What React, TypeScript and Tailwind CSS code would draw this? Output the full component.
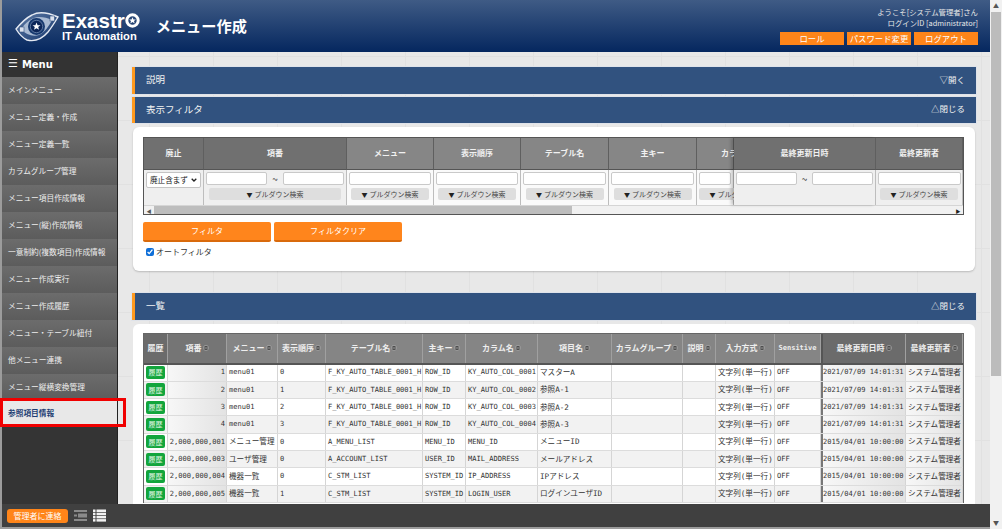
import React from 'react';

const jp = '[font-family:"Noto_Sans_CJK_JP","Liberation_Sans",sans-serif]';

const menuItems = [
    'メインメニュー',
    'メニュー定義・作成',
    'メニュー定義一覧',
    'カラムグループ管理',
    'メニュー項目作成情報',
    'メニュー(縦)作成情報',
    '一意制約(複数項目)作成情報',
    'メニュー作成実行',
    'メニュー作成履歴',
    'メニュー・テーブル紐付',
    '他メニュー連携',
    'メニュー縦横変換管理',
];

const filterCols = [
    { label: '廃止', w: 61, kind: 'select', dark: true },
    { label: '項番', w: 143, kind: 'range', dark: true },
    { label: 'メニュー', w: 87, kind: 'text' },
    { label: '表示順序', w: 87, kind: 'text' },
    { label: 'テーブル名', w: 88, kind: 'text' },
    { label: '主キー', w: 88, kind: 'text' },
    { label: 'カラム名', w: 37, kind: 'text', clip: true },
    { label: '最終更新日時', w: 142, kind: 'date', dark: true },
    { label: '最終更新者', w: 88, kind: 'text', dark: true },
];

const listCols = [
    { label: '履歴', w: 24, tone: 'bg-[#6b6b6b]', sort: false },
    { label: '項番', w: 59, tone: 'bg-[#757575]', sort: true },
    { label: 'メニュー', w: 51, tone: 'bg-[#858585]', sort: true },
    { label: '表示順序', w: 48, tone: 'bg-[#858585]', sort: true },
    { label: 'テーブル名', w: 97, tone: 'bg-[#858585]', sort: true },
    { label: '主キー', w: 43, tone: 'bg-[#858585]', sort: true },
    { label: 'カラム名', w: 72, tone: 'bg-[#858585]', sort: true },
    { label: '項目名', w: 74, tone: 'bg-[#858585]', sort: true },
    { label: 'カラムグループ', w: 71, tone: 'bg-[#858585]', sort: true },
    { label: '説明', w: 33, tone: 'bg-[#858585]', sort: true },
    { label: '入力方式', w: 59, tone: 'bg-[#858585]', sort: true },
    { label: 'Sensitive', w: 46, tone: 'bg-[#858585]', sort: false },
    { label: '最終更新日時', w: 85, tone: 'bg-[#6b6b6b]', sort: true },
    { label: '最終更新者', w: 57, tone: 'bg-[#6b6b6b]', sort: true },
];

const rows = [
    ['1', 'menu01', '0', 'F_KY_AUTO_TABLE_0001_H', 'ROW_ID', 'KY_AUTO_COL_0001', 'マスターA', '2021/07/09 14:01:31'],
    ['2', 'menu01', '1', 'F_KY_AUTO_TABLE_0001_H', 'ROW_ID', 'KY_AUTO_COL_0002', '参照A-1', '2021/07/09 14:01:31'],
    ['3', 'menu01', '2', 'F_KY_AUTO_TABLE_0001_H', 'ROW_ID', 'KY_AUTO_COL_0003', '参照A-2', '2021/07/09 14:01:31'],
    ['4', 'menu01', '3', 'F_KY_AUTO_TABLE_0001_H', 'ROW_ID', 'KY_AUTO_COL_0004', '参照A-3', '2021/07/09 14:01:31'],
    ['2,000,000,001', 'メニュー管理', '0', 'A_MENU_LIST', 'MENU_ID', 'MENU_ID', 'メニューID', '2015/04/01 10:00:00'],
    ['2,000,000,003', 'ユーザ管理', '0', 'A_ACCOUNT_LIST', 'USER_ID', 'MAIL_ADDRESS', 'メールアドレス', '2015/04/01 10:00:00'],
    ['2,000,000,004', '機器一覧', '0', 'C_STM_LIST', 'SYSTEM_ID', 'IP_ADDRESS', 'IPアドレス', '2015/04/01 10:00:00'],
    ['2,000,000,005', '機器一覧', '1', 'C_STM_LIST', 'SYSTEM_ID', 'LOGIN_USER', 'ログインユーザID', '2015/04/01 10:00:00'],
];

const ExastroLogo = () => (
    <svg width="44" height="31" viewBox="0 0 44 31">
        <defs>
            <linearGradient id="eyeFill" x1="0" y1="0" x2="1" y2="1">
                <stop offset="0" stopColor="#5f7ba6" />
                <stop offset="1" stopColor="#16376d" />
            </linearGradient>
        </defs>
        <path
            d="M1 18 C6 12 11 7 17 4 C24 0 32 1 43 6 C40 11 37 16 33 21 C27 28 20 31 12 29 C8 27 4 23 1 18 Z"
            fill="url(#eyeFill)"
            stroke="#e4e9f2"
            strokeWidth="1.4"
        />
        <path d="M6 18 C11 11 17 6 24 6 C29 6 33 7 37 9 C34 15 30 21 24 24 C18 26 11 24 6 18 Z" fill="#a9bad3" />
        <circle cx="21.5" cy="15.5" r="8.5" fill="#17396f" />
        <circle cx="21.5" cy="15.5" r="6.2" fill="#0b2558" stroke="#6d86ad" strokeWidth="0.8" />
        <path d="M21.5 11.5l1.1 2.7h2.9l-2.3 1.8.8 2.8-2.5-1.6-2.5 1.6.8-2.8-2.3-1.8h2.9z" fill="#fff" />
        <rect x="4.5" y="16" width="4.5" height="5" fill="#dbe2ee" stroke="#33527f" strokeWidth="0.6" />
        <rect x="35" y="5" width="4.5" height="5" fill="#dbe2ee" stroke="#33527f" strokeWidth="0.6" />
    </svg>
);

const SortMark = () => (
    <svg width="6" height="6" viewBox="0 0 6 6" className="ml-px shrink-0">
        <circle cx="3" cy="3" r="2.6" fill="#4a4a4a" stroke="#cfcfcf" strokeWidth="0.5" />
        <path d="M1 3h4" stroke="#cfcfcf" strokeWidth="0.6" />
    </svg>
);

const TextBox = ({ w }: { w: number }) => (
    <div className="h-[13px] shrink-0 rounded-[2px] border border-[#c9c9c9] bg-white" style={{ width: w }} />
);

const PulldownButton = ({ w }: { w: number }) => (
    <div
        className="mx-auto flex h-[12px] items-center justify-center gap-[2px] overflow-hidden whitespace-nowrap rounded-[2px] bg-[#dedede] text-[7px] text-[#444]"
        style={{ width: w }}
    >
        <span className="text-[6px] text-[#222]">▼</span>
        <span>プルダウン検索</span>
    </div>
);

const SectionBar = ({ title, action }: { title: string; action: string }) => (
    <div className="flex h-[26.5px] items-center justify-between border-l-[3px] border-l-[#ff9a1f] bg-[#31527f] pb-[2px] pl-[11px] pr-[11px] text-[9.5px] text-[#f2f2f2] shadow-[0_0_0_1px_#dfe3ea]">
        <span>{title}</span>
        <span className="text-[8.5px]">{action}</span>
    </div>
);

const FilterTable = () => (
    <div className="w-[821px] border border-[#555] bg-[#f3f3f3]">
        <div className="flex">
            {filterCols.map((col, i) => (
                <div
                    key={col.label}
                    className={`shrink-0 overflow-hidden ${col.kind === 'date' ? 'shadow-[-3px_0_3px_rgba(0,0,0,0.2)]' : ''}`}
                    style={{ width: i === 0 ? col.w - 1 : i === filterCols.length - 1 ? col.w - 1 : col.w }}
                >
                    <div
                        className={`flex h-[32px] items-center whitespace-nowrap border-b border-r border-b-[#555] border-r-[#5f5f5f] pb-[2px] text-[8px] font-bold text-[#f1f1f1] ${
                            col.clip ? 'justify-start pl-[24px]' : 'justify-center'
                        } ${col.dark ? 'bg-[#707070]' : 'bg-[#868686]'}`}
                    >
                        {col.label}
                    </div>
                    <div
                        className={`h-[35px] border-r border-[#bdbdbd] p-[2px] ${
                            col.dark ? 'bg-[#efefef]' : 'bg-[#fafafa]'
                        }`}
                    >
                        {col.kind === 'select' && (
                            <div className="flex h-[16px] items-center justify-between rounded-[2px] border border-[#c4c4c4] bg-white px-[3px] text-[7.6px] text-[#222]">
                                <span className="whitespace-nowrap">廃止含まず</span>
                                <svg width="6" height="4" viewBox="0 0 6 4">
                                    <path d="M.7.7 3 3l2.3-2.3" fill="none" stroke="#222" strokeWidth="1.3" />
                                </svg>
                            </div>
                        )}
                        {(col.kind === 'range' || col.kind === 'date') && (
                            <div className="flex items-center justify-between">
                                <TextBox w={61} />
                                <span className="text-[10px] leading-[13px] text-[#444]">~</span>
                                <TextBox w={61} />
                            </div>
                        )}
                        {col.kind === 'range' && (
                            <div className="mt-[3px]">
                                <PulldownButton w={132} />
                            </div>
                        )}
                        {col.kind === 'text' && (
                            <div className="flex flex-col gap-[3px]">
                                <TextBox w={col.w - 5} />
                                <PulldownButton w={78} />
                            </div>
                        )}
                    </div>
                </div>
            ))}
        </div>
        <div className="flex h-[9px] items-center border-t border-[#d5d5d5] bg-[#f1f1f1]">
            <span className="w-[10px] text-center text-[5px] leading-none text-[#555]">◀</span>
            <div className="h-[8px] w-[418px] bg-[#bdbdbd]" />
            <div className="flex-1" />
            <span className="w-[10px] text-center text-[5px] leading-none text-[#222]">▶</span>
        </div>
    </div>
);

const ListCell = ({ text, right, tight }: { text: string; right?: boolean; tight?: boolean }) => {
    const wide = /[^\x00-\x7f]/.test(text);
    return (
        <span
            className={`block w-full overflow-hidden whitespace-nowrap ${right ? 'pr-[1px] text-right' : tight ? 'pl-0' : 'pl-[2px]'} ${
                wide ? 'text-[7.6px]' : 'text-[7.05px]'
            }`}
        >
            {text}
        </span>
    );
};

const ListTable = () => (
    <div className="w-[821px] border border-b-0 border-[#666] bg-white [font-family:'DejaVu_Sans_Mono','Noto_Sans_CJK_JP',monospace]">
        <div className="flex h-[31px] border-b-2 border-[#555]">
            {listCols.map(col => (
                <div
                    key={col.label}
                    className={`flex shrink-0 items-center justify-center whitespace-nowrap border-r border-[#a0a0a0] text-[#eee] ${col.tone} ${
                        col.label === 'Sensitive' ? 'text-[7px] font-bold' : 'text-[8px] font-bold ' + jp
                    } ${col.label === '最終更新日時' ? 'border-l-2 border-l-[#555]' : ''}`}
                    style={{ width: col.w }}
                >
                    {col.label}
                    {col.sort && <SortMark />}
                </div>
            ))}
        </div>
        {rows.map((r, i) => {
            const cells = [r[0], r[1], r[2], r[3], r[4], r[5], r[6], '', '', '文字列(単一行)', 'OFF', r[7], 'システム管理者'];
            return (
                <div key={r[0]} className={`flex h-[17.33px] items-center border-b border-[#dcdcdc] text-[#333] ${i % 2 ? 'bg-[#f2f2f2]' : 'bg-white'}`}>
                    <div className="flex h-full w-[24px] shrink-0 items-center justify-center border-r border-[#d5d5d5]">
                        <span className={`flex h-[13px] w-[19px] items-center justify-center rounded-[2px] bg-[#12a53c] text-[7px] text-[#e4f8e9] ${jp}`}>
                            履歴
                        </span>
                    </div>
                    {cells.map((c, j) => (
                        <div
                            key={j}
                            className={`flex h-full shrink-0 items-center border-r border-[#d5d5d5] ${
                                j === 0 || j === 11 || j === 12 ? 'bg-[linear-gradient(90deg,#f7f7f7,#e3e3e3)]' : ''
                            } ${j === 11 ? 'border-l-2 border-l-[#777]' : ''}`}
                            style={{ width: listCols[j + 1].w }}
                        >
                            <ListCell text={c} right={j === 0} tight={j === 11} />
                        </div>
                    ))}
                </div>
            );
        })}
    </div>
);

export default function App() {
    return (
        <div className={`relative flex h-[529px] w-[1002px] overflow-hidden bg-[#9c9c9c] pl-[2px] ${jp}`}>
            <div className="flex h-full w-[988px] flex-col pb-[2px]">
                <header className="flex h-[52px] shrink-0 items-center justify-between bg-[linear-gradient(180deg,#3f5b85,#05275f)] pr-[12px]">
                    <div className="flex items-center">
                        <div className="ml-[13px]">
                            <ExastroLogo />
                        </div>
                        <div className="ml-[3px] flex flex-col text-white">
                            <div className="flex items-center text-[20.5px] font-bold leading-[19px] [font-family:'Liberation_Sans',sans-serif]">
                                Exastr
                                <svg width="15" height="15" viewBox="0 0 15 15">
                                    <circle cx="7.5" cy="7.5" r="5.7" fill="none" stroke="#fff" strokeWidth="3" />
                                    <path d="M7.5 4.2l1 2.3h2.4l-1.9 1.5.7 2.4-2.2-1.4-2.2 1.4.7-2.4-1.9-1.5h2.4z" fill="#fff" />
                                </svg>
                            </div>
                            <div className="text-[11.2px] font-bold leading-[12px] [font-family:'Liberation_Sans',sans-serif]">IT Automation</div>
                        </div>
                        <h1 className="ml-[16px] pb-[2px] text-[15.2px] font-bold text-white">メニュー作成</h1>
                    </div>
                    <div className="flex flex-col items-end text-[7.4px] leading-[10.5px] text-[#e8e8e8]">
                        <div>ようこそ[システム管理者]さん</div>
                        <div>ログインID [administrator]</div>
                        <div className="mt-[4px] flex gap-[3px]">
                            {['ロール', 'パスワード変更', 'ログアウト'].map(label => (
                                <div key={label} className="flex h-[13px] w-[64px] items-center justify-center bg-[#ff8519] text-[8.4px] text-white">
                                    {label}
                                </div>
                            ))}
                        </div>
                    </div>
                </header>

                <div className="flex min-h-0 flex-1">
                    <aside className="flex w-[116px] shrink-0 flex-col border-r border-[#222] bg-[#343434]">
                        <div className="flex h-[25px] items-center gap-[4px] bg-[#333] pl-[6px] text-[10px] font-bold text-white [font-family:'DejaVu_Sans',sans-serif]">
                            <span className="text-[11px] font-normal">☰</span>
                            Menu
                        </div>
                        {menuItems.map(item => (
                            <div
                                key={item}
                                className="flex h-[27px] shrink-0 items-center whitespace-nowrap bg-[linear-gradient(180deg,#6c6c6c,#5c5c5c)] pb-[2px] pl-[6px] text-[7.7px] text-[#eee]"
                            >
                                {item}
                            </div>
                        ))}
                        <div className="flex h-[26px] shrink-0 items-center bg-[#e8e8e8] pb-[2px] pl-[6px] text-[7.7px] font-bold text-[#1d3d73]">
                            参照項目情報
                        </div>
                    </aside>

                    <main className="min-w-0 flex-1 overflow-hidden bg-[#e8e8e8] bg-[linear-gradient(#e1e1e1_1px,transparent_1px),linear-gradient(90deg,#e1e1e1_1px,transparent_1px)] bg-[size:64px_64px] bg-[position:31px_4px] pl-[14px] pr-[14px] pt-[15px]">
                        <SectionBar title="説明" action="▽開く" />
                        <div className="mt-[3px]">
                            <SectionBar title="表示フィルタ" action="△閉じる" />
                        </div>
                        <section className="mx-[1px] mt-[4px] h-[144px] rounded-[6px] bg-white pl-[10px] pt-[10px] shadow-[0_1px_2px_rgba(0,0,0,0.2)]">
                            <FilterTable />
                            <div className="mt-[7px] flex gap-[3px]">
                                {['フィルタ', 'フィルタクリア'].map(label => (
                                    <div
                                        key={label}
                                        className="flex h-[20px] w-[128px] items-center justify-center rounded-[2px] border-b-2 border-[#d96a0c] bg-[#ff851c] pb-[1px] text-[8px] text-white"
                                    >
                                        {label}
                                    </div>
                                ))}
                            </div>
                            <label className="ml-[3px] mt-[4px] flex items-center gap-[2px] text-[8px] text-[#333]">
                                <input type="checkbox" defaultChecked className="m-0 h-[8px] w-[8px] accent-[#0f6fd8]" />
                                オートフィルタ
                            </label>
                        </section>
                        <div className="mt-[22px]">
                            <SectionBar title="一覧" action="△閉じる" />
                        </div>
                        <section className="mx-[1px] mt-[4px] h-[200px] rounded-t-[6px] bg-white pl-[10px] pt-[9px]">
                            <ListTable />
                        </section>
                    </main>
                </div>

                <footer className="flex h-[23px] shrink-0 items-center gap-[6px] bg-[#404040] pl-[5px]">
                    <div className="flex h-[14px] w-[61px] items-center justify-center rounded-[3px] bg-[#ff8519] text-[8px] text-white">
                        管理者に連絡
                    </div>
                    <svg width="13" height="13" viewBox="0 0 13 13" fill="#8a8a8a">
                        <rect x="0" y="1" width="13" height="2" />
                        <rect x="4" y="4.5" width="9" height="4" />
                        <rect x="0" y="5.5" width="3" height="2" />
                        <rect x="0" y="10" width="13" height="2" />
                    </svg>
                    <svg width="13" height="13" viewBox="0 0 13 13" fill="#f2f2f2">
                        <rect x="0" y="0.5" width="2.5" height="2.5" />
                        <rect x="3.5" y="0.5" width="9.5" height="2.5" />
                        <rect x="0" y="3.7" width="2.5" height="2.5" />
                        <rect x="3.5" y="3.7" width="9.5" height="2.5" />
                        <rect x="0" y="6.9" width="2.5" height="2.5" />
                        <rect x="3.5" y="6.9" width="9.5" height="2.5" />
                        <rect x="0" y="10.1" width="2.5" height="2.5" />
                        <rect x="3.5" y="10.1" width="9.5" height="2.5" />
                    </svg>
                </footer>
            </div>

            <div className="flex w-[12px] shrink-0 flex-col bg-[#f1f1f1]">
                <div className="h-[12px] text-center text-[6px] leading-[12px] text-[#555]">▲</div>
                <div className="mx-[1px] h-[364px] bg-[#bcbcbc]" />
                <div className="flex-1" />
                <div className="h-[12px] text-center text-[6px] leading-[12px] text-[#555]">▼</div>
            </div>

            {/* red highlight around the current menu item */}
            <div className="pointer-events-none absolute left-0 top-[398px] h-[29px] w-[126px] border-[3px] border-[#f00000]" />
        </div>
    );
}
